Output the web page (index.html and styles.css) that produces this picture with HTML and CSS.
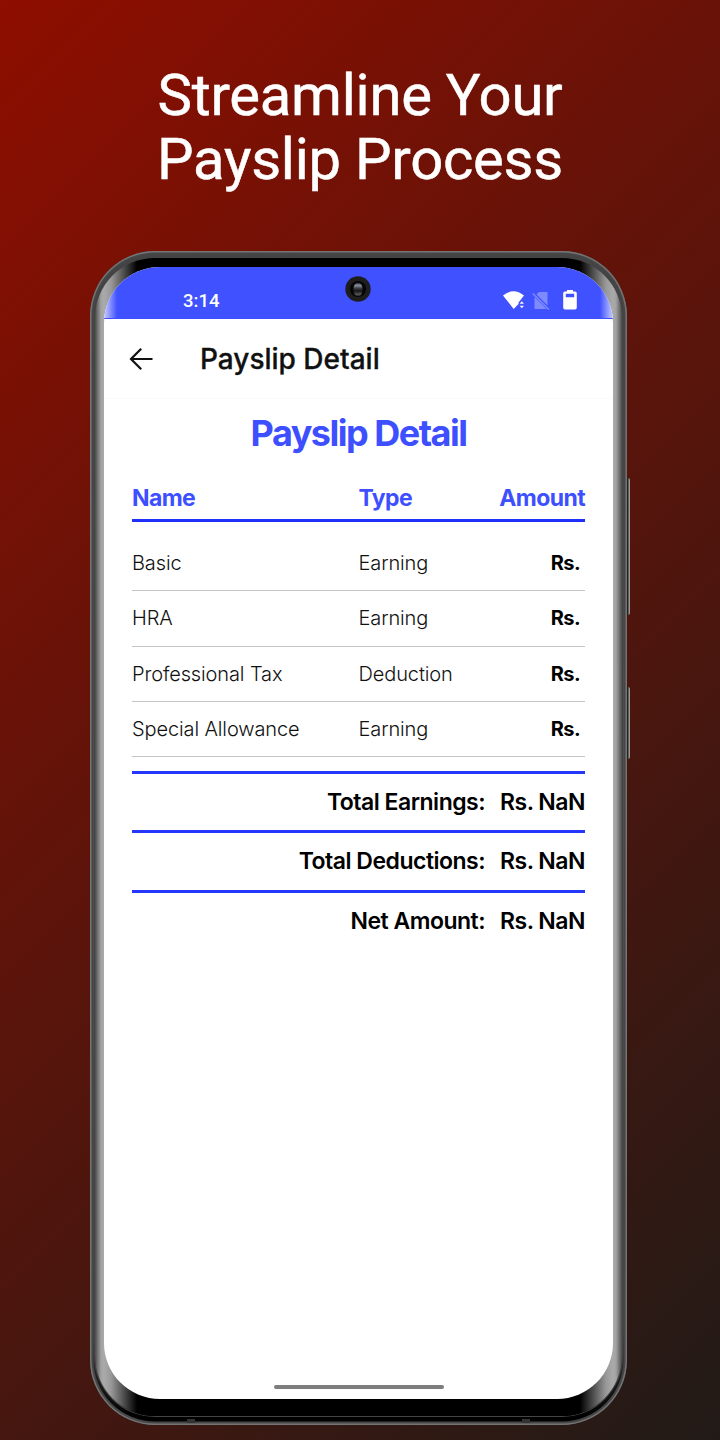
FILE: index.html
```html
<!DOCTYPE html>
<html lang="en">
<head>
<meta charset="utf-8">
<title>Payslip Detail</title>
<link rel="stylesheet" href="styles.css">
</head>
<body>
<main class="poster">
  <h1 class="headline">Streamline Your<br>Payslip Process</h1>
  <div class="phone">
    <i class="key volume"></i><i class="key power"></i>
    <i class="antenna antenna-left"></i><i class="antenna antenna-right"></i>
    <div class="bezel">
      <section class="screen">
        <header class="status">
          <span class="time">3:14</span>
          <svg class="camera" width="26" height="26" viewBox="0 0 26 26">
            <defs>
              <linearGradient id="lens" x2="0" y2="1"><stop offset="0" stop-color="#10141c"/><stop offset=".2" stop-color="#8b929e"/><stop offset=".42" stop-color="#3a3d44"/><stop offset=".6" stop-color="#151515"/><stop offset=".85" stop-color="#555"/><stop offset="1" stop-color="#111"/></linearGradient>
            </defs>
            <circle cx="13" cy="13" r="12.7" fill="#1e1e1e"/>
            <circle cx="13" cy="13" r="8" fill="#050505"/>
            <ellipse cx="13" cy="13.5" rx="4.6" ry="7" fill="url(#lens)"/>
          </svg>
          <svg class="signals" width="76" height="22" viewBox="0 0 76 22">
            <path d="M0 5.500Q10.500-3 21 5.500L17.500 10 15.500 12.500V14L10.700 19Z" fill="#fff"/>
            <path d="M16.700 13.800 18.800 11.300 20.900 13.800ZM16.700 15.800 18.800 18.300 20.900 15.800Z" fill="#fff"/>
            <path d="M33.800 4 36 2H44.500V15.500L33.800 4.800ZM31.500 7V19H43.500Z" fill="#7f8aff"/>
            <path d="M29.800 3.500 45.800 19.500" stroke="#7f8aff" stroke-width="1.500"/>
            <path fill-rule="evenodd" d="M64 0H70V1.500H72Q73.800 1.500 73.800 3.300V17.500Q73.800 19.500 72 19.500H62Q60.200 19.500 60.200 17.500V3.300Q60.200 1.500 62 1.500H64ZM62.800 3.800V7.200H71.200V3.800Z" fill="#fff"/>
          </svg>
        </header>
        <nav class="appbar">
          <svg width="24" height="24" viewBox="0 0 24 24" fill="none" stroke="#111" stroke-width="2.200"><path d="M23.500 12H2M12.200 1.800 2 12 12.200 22.200"/></svg>
          <span class="appbar-title">Payslip Detail</span>
        </nav>
        <div class="content">
          <h2 class="title">Payslip Detail</h2>
          <div class="row head"><span>Name</span><span>Type</span><span class="amount">Amount</span></div>
          <div class="items">
            <div class="row item"><span>Basic</span><span>Earning</span><b class="amount">Rs.</b></div>
            <div class="row item"><span>HRA</span><span>Earning</span><b class="amount">Rs.</b></div>
            <div class="row item"><span>Professional Tax</span><span>Deduction</span><b class="amount">Rs.</b></div>
            <div class="row item"><span>Special Allowance</span><span>Earning</span><b class="amount">Rs.</b></div>
          </div>
          <div class="total"><span>Total Earnings:</span><span>Rs. NaN</span></div>
          <div class="total"><span>Total Deductions:</span><span>Rs. NaN</span></div>
          <div class="total"><span>Net Amount:</span><span>Rs. NaN</span></div>
        </div>
        <div class="home-bar"></div>
      </section>
    </div>
  </div>
</main>
</body>
</html>
```
FILE: styles.css
```css
* { box-sizing: border-box; }
body { margin: 0; }
.poster {
  height: 1440px;
  overflow: hidden;
  padding-top: 63px;
  background: linear-gradient(135deg, #8e0e00, #211b17);
}
.headline {
  margin: 0 0 60px;
  color: #fff;
  font: 400 58px/64px Roboto, sans-serif;
  letter-spacing: -.25px;
  text-align: center;
  -webkit-text-stroke: .5px #fff;
}
.phone {
  position: relative;
  width: 537px;
  height: 1174px;
  margin-left: 90px;
  padding: 7px 5px 9px;
  border-radius: 65px;
  background: linear-gradient(#444, #444 80px, #555 50%, #444 1080px, #000 1166px);
  box-shadow: inset 0 0 0 1.500px #747474, inset 0 0 0 3.500px #464646;
}
.bezel {
  height: 100%;
  padding: 9px 9px 17px;
  border-radius: 60px;
  background: linear-gradient(90deg, #4a4a4a, #777 3px, #a2a2a2 6px, #aaa 9px, #999 16px, #000 42px, #000 485px, #999 511px, #aaa 518px, #a2a2a2 521px, #777 524px, #4a4a4a);
  box-shadow: 0 0 0 1px #444;
}
.screen {
  display: flex;
  flex-direction: column;
  height: 100%;
  border-radius: 56px;
  overflow: hidden;
  background: #fff;
  font-family: Inter, "Liberation Sans", sans-serif;
}
.key { position: absolute; left: 537px; width: 3px; background: linear-gradient(90deg, #222 1px, #999 2px); border-radius: 0 2px 2px 0; }
.volume { top: 227px; height: 137px; }
.power { top: 436px; height: 72px; }
.antenna { position: absolute; bottom: 2px; width: 8px; height: 4px; background: #333; }
.antenna-left { left: 97px; }
.antenna-right { left: 432px; }
.status {
  display: grid;
  grid-template-columns: 1fr 26px 1fr;
  flex: none;
  height: 52px;
  padding: 9px 34px 0 79px;
  background: linear-gradient(90deg, #c8ccff, #4052ff 13px, #4052ff 496px, #c8ccff);
  border-bottom: 1px solid #3d4fff;
}
.time { padding-top: 14px; color: #fff; font: 500 18.500px/22px Roboto, sans-serif; }
.camera { margin-left: -23px; }
.signals { justify-self: end; margin-top: 14px; }
.appbar {
  display: flex;
  align-items: center;
  gap: 47px;
  flex: none;
  height: 80px;
  padding-left: 25px;
  border-bottom: 1px solid #fafafa;
}
.appbar-title { color: #111; font-size: 28px; font-weight: 500; letter-spacing: 0; -webkit-text-stroke: .3px #111; }
.content { padding: 13px 28px 0; }
.title { margin: 0; color: #3d4fff; font-size: 36px; line-height: 42px; font-weight: 650; letter-spacing: -1.500px; text-align: center; }
.row { display: grid; grid-template-columns: 226.500px 1fr auto; }
.head {
  height: 49px;
  margin-top: 19px;
  padding-top: 7px;
  border-bottom: 3px solid #1f30fa;
  color: #3d4fff;
  font-size: 23px;
  line-height: 36px;
  font-weight: 650;
  letter-spacing: -.6px;
}
.items { padding: 14px 0 14px; }
.item {
  height: 55.300px;
  padding-top: 13px;
  border-bottom: 1.500px solid #c4c4c4;
  color: #111;
  font-size: 20px;
  line-height: 28px;
  font-weight: 350;
  letter-spacing: -.12px;
}
.item .amount { padding-right: 5px; color: #000; font-weight: 700; letter-spacing: -.6px; }
.total {
  display: flex;
  justify-content: flex-end;
  gap: 15px;
  height: 59.300px;
  padding-top: 14px;
  border-top: 3px solid #2437fb;
  color: #000;
  font-size: 23px;
  line-height: 28px;
  font-weight: 600;
  letter-spacing: -.5px;
}
.home-bar { width: 170px; height: 4px; margin: auto auto 10px 170px; border-radius: 2px; background: #7d7d7d; }
```
